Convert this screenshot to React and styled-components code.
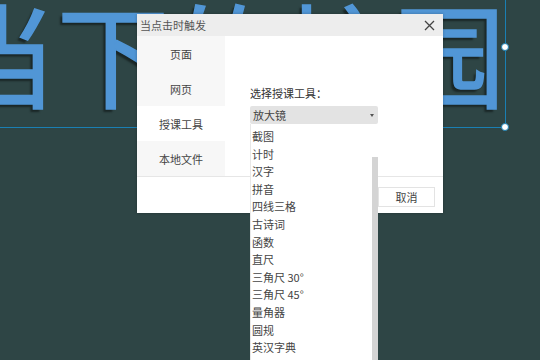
import React from 'react';
import styled, { createGlobalStyle } from 'styled-components';

const GlobalStyle = createGlobalStyle`
  html, body {
    margin: 0;
    padding: 0;
  }
  body {
    font-family: "Noto Sans CJK SC", "Noto Sans", sans-serif;
  }
`;

const tabs = ['页面', '网页', '授课工具', '本地文件'];
const tools = [
  '截图',
  '计时',
  '汉字',
  '拼音',
  '四线三格',
  '古诗词',
  '函数',
  '直尺',
  '三角尺 30°',
  '三角尺 45°',
  '量角器',
  '圆规',
  '英汉字典',
];

const App = () => {
  return (
    <>
      <GlobalStyle />
      <Stage>
        <SlideText>当下的校园</SlideText>
        <Selection>
          <Handle style={{ top: 80 }} />
          <Handle style={{ top: 160 }} />
        </Selection>

        <Dialog>
          <TitleBar>
            <span>当点击时触发</span>
            <Close>
              <svg width="11" height="11" viewBox="0 0 11 11">
                <path d="M1 1L10 10M10 1L1 10" stroke="#444" strokeWidth="1.3" />
              </svg>
            </Close>
          </TitleBar>
          <Body>
            <Sidebar>
              {tabs.map((t) => (
                <Tab key={t} active={t === '授课工具'}>
                  {t}
                </Tab>
              ))}
            </Sidebar>
            <Content>
              <Label>选择授课工具：</Label>
              <SelectWrap>
                <Select>
                  <span>放大镜</span>
                  <Caret />
                </Select>
                <Options>
                  <OptionList>
                    {tools.map((t) => (
                      <Option key={t}>{t}</Option>
                    ))}
                  </OptionList>
                  <ScrollBar>
                    <Thumb />
                  </ScrollBar>
                </Options>
              </SelectWrap>
            </Content>
          </Body>
          <Footer>
            <Button>取消</Button>
          </Footer>
        </Dialog>
      </Stage>
    </>
  );
};

export default App;

const Stage = styled.div`
  position: relative;
  width: 540px;
  height: 360px;
  overflow: hidden;
  background: #2e4545;
`;

const SlideText = styled.div`
  position: absolute;
  left: -55px;
  top: -5px;
  font-size: 112px;
  font-weight: 400;
  line-height: 1;
  white-space: nowrap;
  color: #5196d6;
  -webkit-text-stroke: 1.6px #5196d6;
  text-shadow: -3px 3px 2px rgba(0, 0, 0, 0.45);
`;

const Selection = styled.div`
  position: absolute;
  left: -80px;
  top: -33px;
  width: 585px;
  height: 160px;
  border: 1px solid #1a7fb3;
  border-left: none;
  border-top: none;
`;

const Handle = styled.div`
  position: absolute;
  right: -4px;
  margin-top: -4px;
  width: 6px;
  height: 6px;
  border-radius: 50%;
  background: #ffffff;
  border: 1px solid #1a7fb3;
`;

const Dialog = styled.div`
  position: absolute;
  left: 137px;
  top: 14px;
  width: 306px;
  height: 199px;
  background: #ffffff;
  display: flex;
  flex-direction: column;
  box-shadow: 0 0 3px rgba(0, 0, 0, 0.25);
`;

const TitleBar = styled.div`
  height: 22px;
  flex: none;
  display: flex;
  align-items: center;
  justify-content: space-between;
  padding: 0 8px 0 3px;
  background: #ededed;
  font-size: 11px;
  color: #555;
`;

const Close = styled.div`
  display: flex;
  align-items: center;
`;

const Body = styled.div`
  display: flex;
  height: 140px;
  flex: none;
  border-bottom: 1px solid #e6e6e6;
`;

const Sidebar = styled.div`
  width: 88px;
  display: flex;
  flex-direction: column;
  background: #f7f7f7;
`;

const Tab = styled.div`
  height: 35px;
  display: flex;
  align-items: center;
  justify-content: center;
  padding-top: 1px;
  box-sizing: border-box;
  font-size: 11px;
  color: #444;
  background: ${({ active }) => (active ? '#ffffff' : 'transparent')};
`;

const Content = styled.div`
  flex: 1;
  padding: 49px 0 0 25px;
`;

const Label = styled.div`
  font-size: 11px;
  color: #333;
  line-height: 16px;
  margin-bottom: 5px;
`;

const SelectWrap = styled.div`
  position: relative;
  width: 128px;
`;

const Select = styled.div`
  height: 18px;
  display: flex;
  align-items: center;
  justify-content: space-between;
  padding: 0 4px 0 3px;
  background: #e3e3e3;
  border-radius: 2px;
  font-size: 11px;
  color: #444;
`;

const Caret = styled.div`
  width: 0;
  height: 0;
  border-left: 2px solid transparent;
  border-right: 2px solid transparent;
  border-top: 3px solid #555;
`;

const Options = styled.div`
  position: absolute;
  left: 0;
  top: 18px;
  width: 128px;
  height: 240px;
  display: flex;
  background: #ffffff;
  border-left: 1px solid #e8e8e8;
  box-sizing: border-box;
  z-index: 2;
`;

const OptionList = styled.div`
  flex: 1;
  padding-top: 4px;
`;

const Option = styled.div`
  height: 17.6px;
  line-height: 17.6px;
  padding-left: 1px;
  font-size: 11px;
  color: #444;
`;

const ScrollBar = styled.div`
  width: 6px;
  padding-top: 33px;
  background: #ffffff;
`;

const Thumb = styled.div`
  height: 100%;
  background: #d4d4d4;
`;

const Footer = styled.div`
  flex: 1;
  display: flex;
  justify-content: flex-end;
  align-items: flex-start;
  padding: 10px 8px 0 0;
`;

const Button = styled.div`
  width: 55px;
  height: 18px;
  display: flex;
  align-items: center;
  justify-content: center;
  border: 1px solid #e3e3e3;
  font-size: 11px;
  color: #444;
`;
